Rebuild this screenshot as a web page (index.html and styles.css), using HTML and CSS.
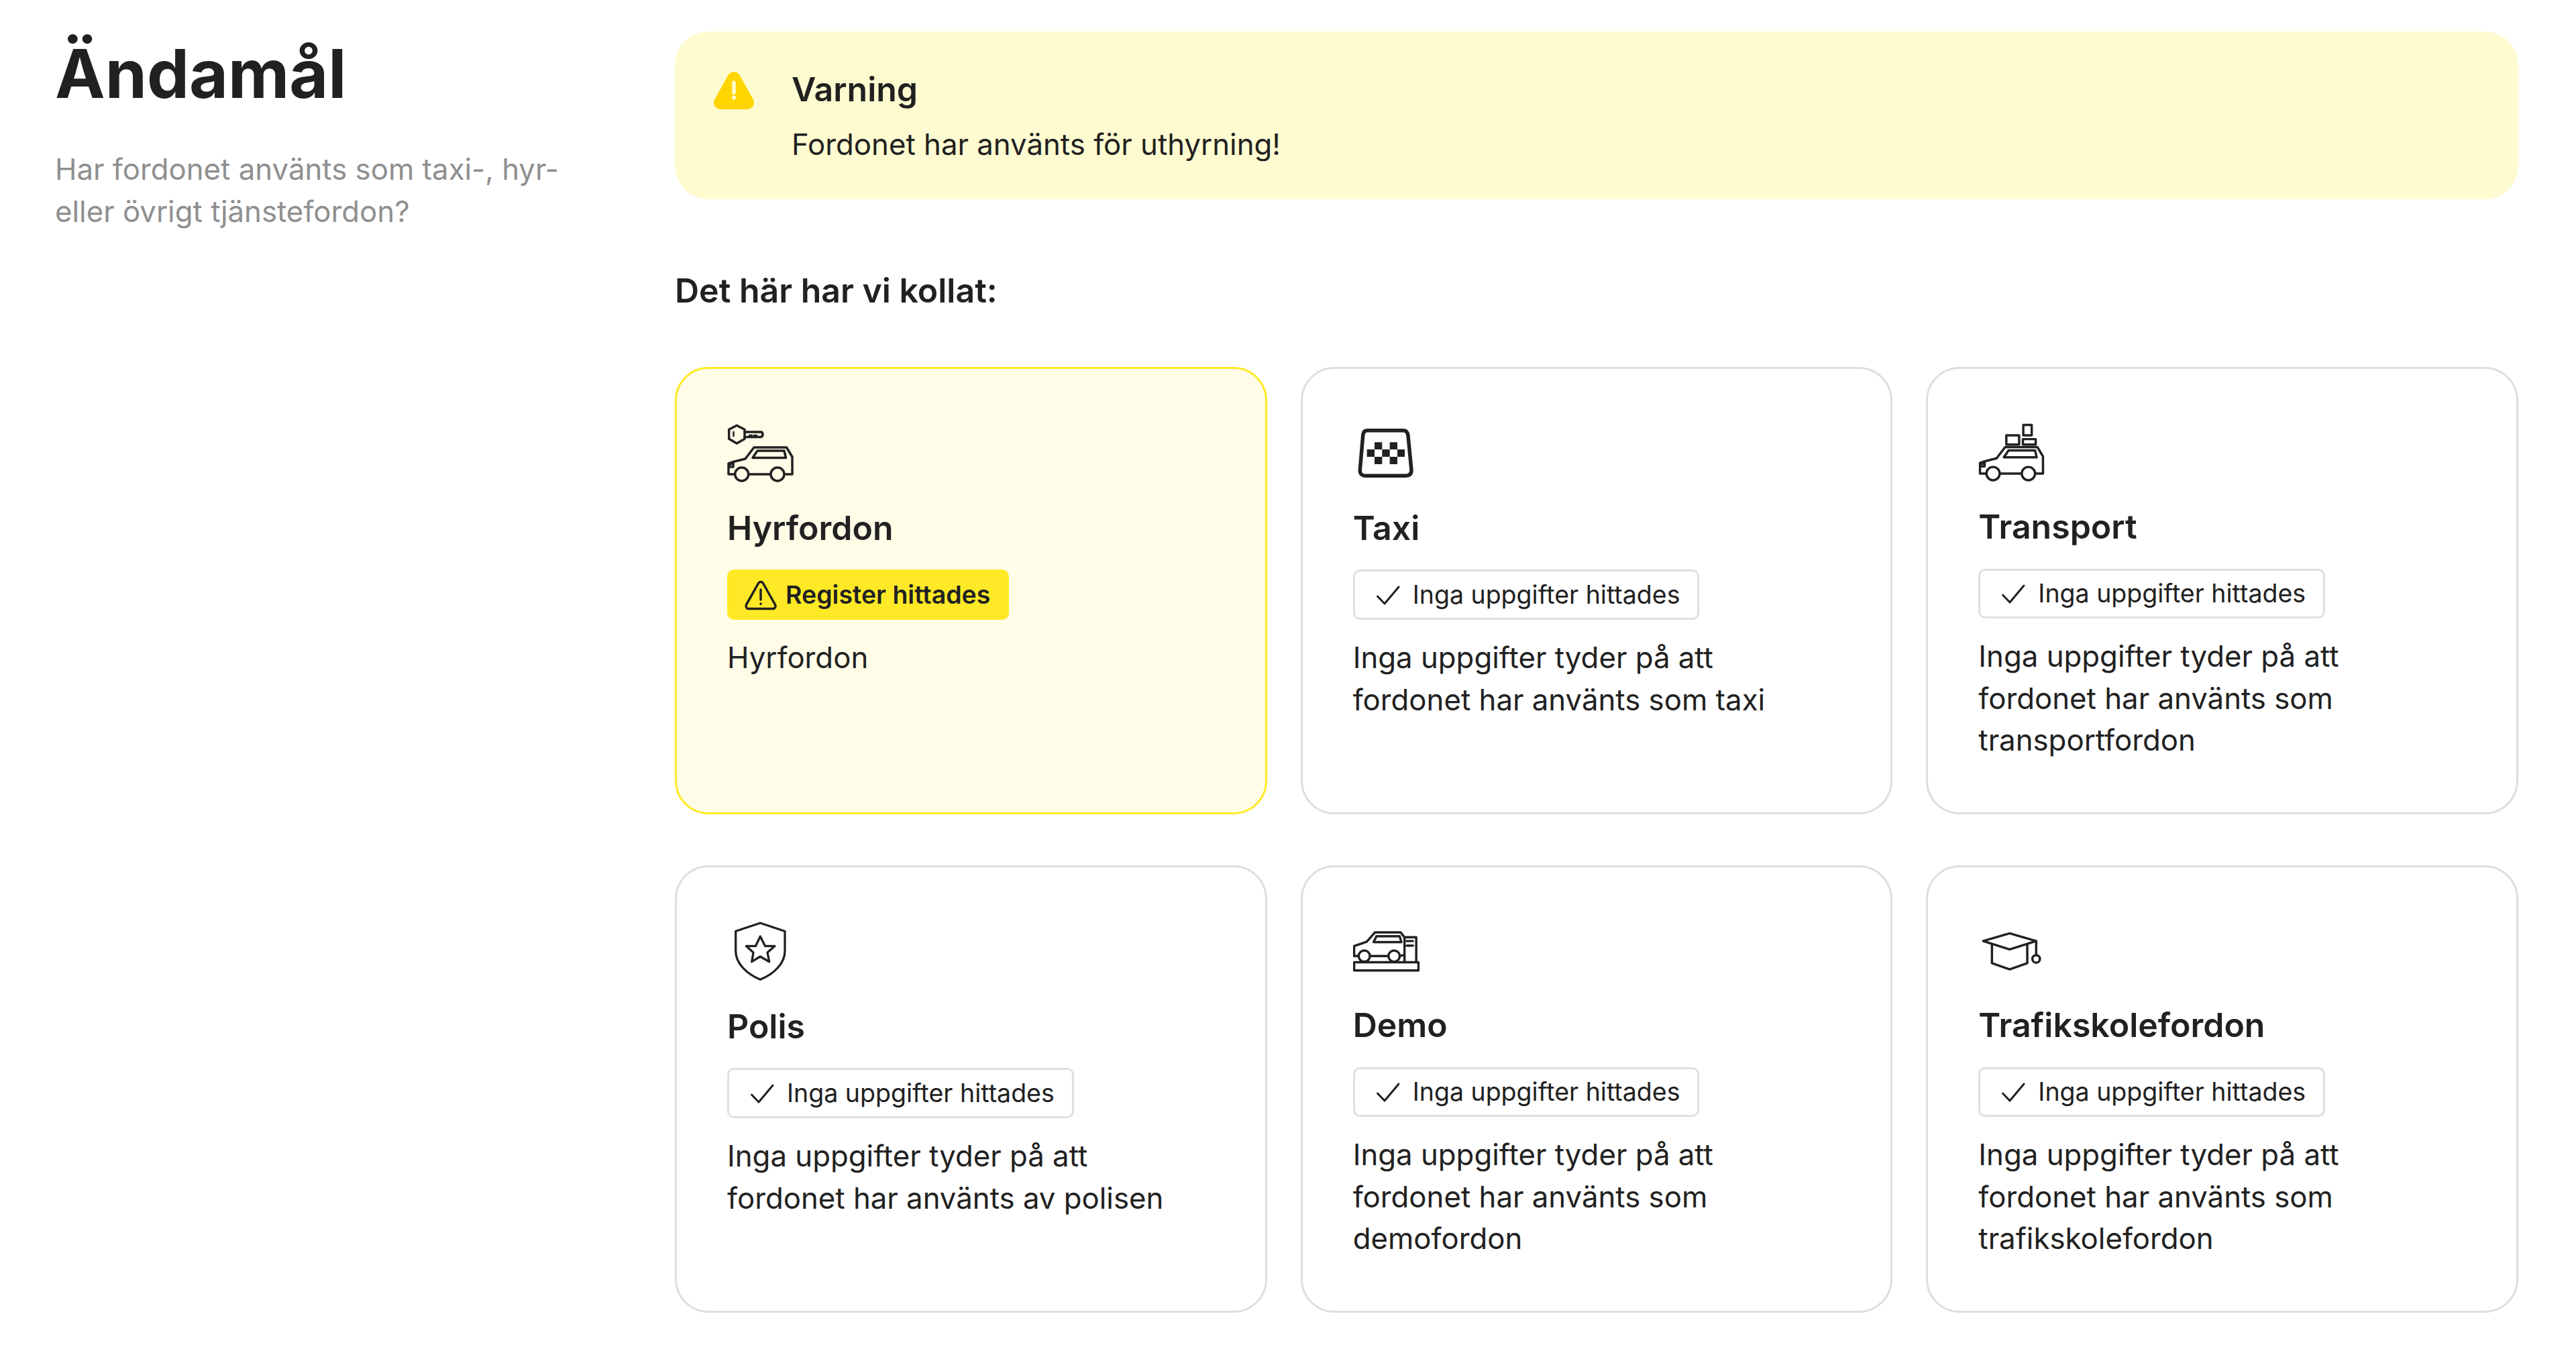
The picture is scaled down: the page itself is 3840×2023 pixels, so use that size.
FILE: index.html
```html
<!DOCTYPE html>
<html lang="sv">
<head>
<meta charset="utf-8">
<title>Ändamål</title>
<link rel="stylesheet" href="styles.css">
</head>
<body>
<svg class="defs" width="0" height="0">
  <defs>
    <g id="car">
      <path d="M11 82H2V66L9 63.500 27 59 40 42H88.500L97 56V82H85.500M32 82H64.500"/>
      <path d="M45 47H85L87.500 57.500H38Z"/>
      <path d="M3 68L9 65V71H4"/>
      <circle cx="21.700" cy="82" r="10"/>
      <circle cx="75" cy="82" r="10"/>
    </g>
  </defs>
</svg>
<main class="page">
  <aside class="side">
    <h1 class="title">Ändamål</h1>
    <p class="lead">Har fordonet använts som taxi-, hyr-<br>eller övrigt tjänstefordon?</p>
  </aside>
  <section class="content">
    <div class="alert">
      <svg class="alert-icon" viewBox="0 0 60 56"><path class="alert-tri" d="M30 10L50 46H10Z"/><path class="alert-mark" d="M30 16V31"/><path class="alert-mark" d="M30 38V39"/></svg>
      <div class="alert-body">
        <h2 class="alert-title">Varning</h2>
        <p class="alert-text">Fordonet har använts för uthyrning!</p>
      </div>
    </div>
    <h3 class="checked">Det här har vi kollat:</h3>
    <div class="cards">
      <article class="card card-warn">
        <svg class="icon" viewBox="0 0 100 100">
          <path d="M14.300 9.300L26 15.300V29.300L14.300 36 2.700 29.300V15.300Z"/>
          <path d="M26 19H50Q53 19 53 22.500T50 26.500H26"/>
          <path class="thin" d="M9.500 19V25M33 24H37M40 24H44"/>
          <use href="#car"/>
        </svg>
        <h4 class="card-title">Hyrfordon</h4>
        <span class="badge badge-warn">
          <svg class="badge-icon" viewBox="0 0 50 50"><path d="M21.500 7.500a4 4 0 0 1 7 0L46.500 39.500a4 4 0 0 1-3.500 6H7a4 4 0 0 1-3.500-6Z"/><path d="M25 17V32M25 38V38.500"/></svg>
          Register hittades
        </span>
        <p class="card-text">Hyrfordon</p>
      </article>
      <article class="card">
        <svg class="icon icon-taxi" viewBox="0 0 100 100">
          <path d="M21.300 16.700H74.700Q81 16.700 82 24.300L87 76Q87 84.300 78 84.300H19.700Q10 84.300 10.300 76L14.700 24.300Q15.500 16.700 21.300 16.700Z"/>
          <path class="solid" d="M32 34.300H43.300V45H32ZM54.700 34.300H66V45H54.700ZM20.700 45H32V56H20.700ZM43.300 45H54.700V56H43.300ZM66 45H77V56H66ZM32 56H43.300V67H32ZM54.700 56H66V67H54.700Z"/>
        </svg>
        <h4 class="card-title">Taxi</h4>
        <span class="badge"><svg class="badge-icon badge-check" viewBox="0 0 50 50"><path d="M9.500 27L20 38 41 13"/></svg>Inga uppgifter hittades</span>
        <p class="card-text">Inga uppgifter tyder på att fordonet har använts som taxi</p>
      </article>
      <article class="card">
        <svg class="icon" viewBox="0 0 100 100">
          <use href="#car"/>
          <path d="M41.700 24.300H61V38.300H41.700ZM66.700 30H86V38.300H66.700ZM67.300 8.700H80V24.300H67.300Z"/>
        </svg>
        <h4 class="card-title">Transport</h4>
        <span class="badge"><svg class="badge-icon badge-check" viewBox="0 0 50 50"><path d="M9.500 27L20 38 41 13"/></svg>Inga uppgifter hittades</span>
        <p class="card-text">Inga uppgifter tyder på att fordonet har använts som transportfordon</p>
      </article>
      <article class="card">
        <svg class="icon icon-thin" viewBox="0 0 100 100">
          <path d="M49.300 8L86 20.300V49.700C86 68 70 84 49.300 92.300 29 84 12.700 68 12.700 49.700V20.300Z"/>
          <path d="M49.300 28L56.500 42.300H71L60 52 62.700 65.700 49.300 58 36.700 65.700 39 52 28.300 42.300H42.500Z"/>
        </svg>
        <h4 class="card-title">Polis</h4>
        <span class="badge"><svg class="badge-icon badge-check" viewBox="0 0 50 50"><path d="M9.500 27L20 38 41 13"/></svg>Inga uppgifter hittades</span>
        <p class="card-text">Inga uppgifter tyder på att fordonet har använts av polisen</p>
      </article>
      <article class="card">
        <svg class="icon" viewBox="0 0 100 100">
          <path d="M1 67.300H98V79.700H1Z"/>
          <path d="M8 58H1V43L20 36.300 32.300 22.300H71.300L77 29.700H94.700V67.300M77 29.700V67.300M25 58H52.500M70 58L77 56"/>
          <path d="M34.700 28H69.700L72.300 37H30.300Z"/>
          <path d="M80.300 35.300H89.700M80.300 42.300H89.700"/>
          <circle cx="16.300" cy="58" r="8.500"/>
          <circle cx="61.300" cy="58" r="8.500"/>
        </svg>
        <h4 class="card-title">Demo</h4>
        <span class="badge"><svg class="badge-icon badge-check" viewBox="0 0 50 50"><path d="M9.500 27L20 38 41 13"/></svg>Inga uppgifter hittades</span>
        <p class="card-text">Inga uppgifter tyder på att fordonet har använts som demofordon</p>
      </article>
      <article class="card">
        <svg class="icon" viewBox="0 0 100 100">
          <path d="M46.700 23.700L86.700 35.300 46.700 48 6.700 35.300Z"/>
          <path d="M20 41.300V68.700L46.700 78 73.300 68.700V41.300M86.700 35.300V56.300"/>
          <circle cx="86.700" cy="62.300" r="5.700"/>
        </svg>
        <h4 class="card-title">Trafikskolefordon</h4>
        <span class="badge"><svg class="badge-icon badge-check" viewBox="0 0 50 50"><path d="M9.500 27L20 38 41 13"/></svg>Inga uppgifter hittades</span>
        <p class="card-text">Inga uppgifter tyder på att fordonet har använts som trafikskolefordon</p>
      </article>
    </div>
  </section>
</main>
</body>
</html>
```
FILE: styles.css
```css
* { box-sizing: border-box; }
html, body { margin: 0; padding: 0; background: #fff; }
body { font-family: Inter, "Liberation Sans", sans-serif; color: #212121; }
.defs { position: absolute; }
.page { display: grid; grid-template-columns: 924px 2748px; padding: 47px 86px 0 82px; }
.title { margin: 0; font-size: 100px; line-height: 125px; font-weight: 700; }
.lead { margin: 50px 0 0; font-size: 43.750px; line-height: 62.500px; color: #8f8f8f; }
.alert { display: flex; height: 250px; padding: 55px 58px; gap: 56px; background: #fffbd1; border-radius: 50px; }
.alert-icon { width: 60px; height: 56px; margin-top: 5px; flex: none; }
.alert-tri { fill: #ffd500; stroke: #ffd500; stroke-width: 20; stroke-linejoin: round; }
.alert-mark { stroke: #fffbd1; stroke-width: 5.500; stroke-linecap: round; fill: none; }
.alert-title { margin: 0; font-size: 50px; line-height: 62.500px; font-weight: 600; }
.alert-text { margin: 20px 0 0; font-size: 43.750px; line-height: 62.500px; }
.checked { margin: 105px 0 0; font-size: 50px; line-height: 62.500px; font-weight: 600; }
.cards { display: grid; grid-template-columns: repeat(3, 1fr); grid-auto-rows: 667px; column-gap: 50px; row-gap: 76px; margin-top: 82px; }
.card { display: flex; flex-direction: column; align-items: flex-start; padding: 75px 100px 75px 75px; border: 3px solid #dedede; border-radius: 50px; background: #fff; }
.card-warn { background: #fffce8; border-color: #ffe926; }
.icon { display: block; width: 100px; height: 100px; fill: none; stroke: #212121; stroke-width: 3.500; stroke-linejoin: round; stroke-linecap: round; }
.icon-taxi { stroke-width: 5.500; }
.icon-thin { stroke-width: 3.300; }
.icon .solid { fill: #212121; stroke: none; }
.icon .thin { stroke-width: 2.500; }
.card-title { margin: 31px 0 0; font-size: 50px; line-height: 62.500px; font-weight: 600; }
.badge { display: inline-flex; align-items: center; gap: 12px; height: 75px; margin-top: 31px; padding: 0 26px 0 24px; border: 3px solid #e0e0e0; border-radius: 10px; font-size: 37.500px; white-space: nowrap; }
.badge-warn { border: 0; background: #ffe926; font-weight: 600; padding: 0 28px 0 25px; }
.badge-icon { width: 50px; height: 50px; flex: none; fill: none; stroke: #212121; stroke-width: 3.500; stroke-linejoin: round; stroke-linecap: round; }
.badge-check { stroke-width: 3; }
.card-text { margin: 26px 0 0; font-size: 43.750px; line-height: 62.500px; }
```
